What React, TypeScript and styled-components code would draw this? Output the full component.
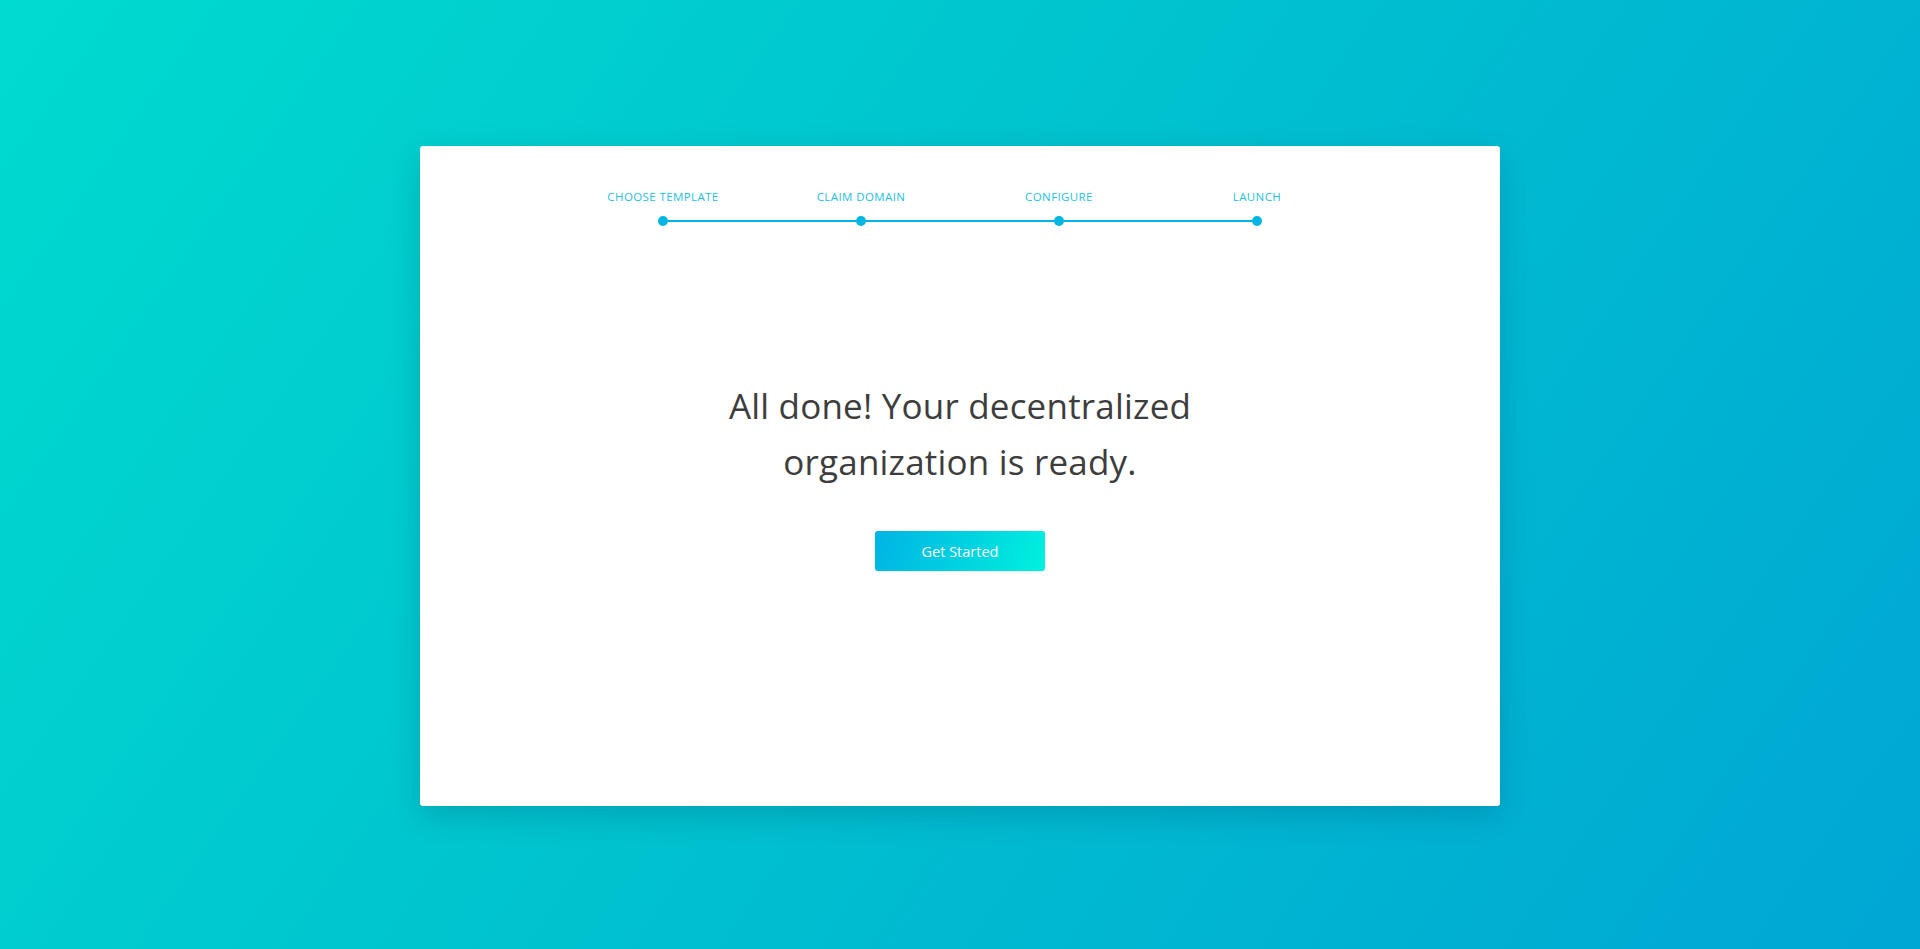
import React from "react";
import styled, { createGlobalStyle } from "styled-components";

const GlobalStyle = createGlobalStyle`
  html, body {
    margin: 0;
    padding: 0;
    height: 100%;
  }
  body {
    font-family: "Open Sans", "Noto Sans", sans-serif;
  }
  #root {
    height: 100%;
  }
`;

const Page = styled.div`
  box-sizing: border-box;
  width: 100%;
  height: 949px;
  padding-top: 3px;
  display: flex;
  align-items: center;
  justify-content: center;
  background: linear-gradient(125deg, #00dbcf 0%, #00c3cf 45%, #00a6d4 100%);
`;

const Card = styled.div`
  box-sizing: border-box;
  width: 1080px;
  height: 660px;
  background: #ffffff;
  border-radius: 3px;
  box-shadow: 0 10px 30px rgba(0, 60, 90, 0.22);
  display: flex;
  flex-direction: column;
  align-items: center;
  padding-top: 43px;
`;

const Stepper = styled.div`
  display: grid;
  grid-template-columns: repeat(4, 198px);
`;

const Step = styled.div`
  display: flex;
  flex-direction: column;
  align-items: center;
`;

const StepLabel = styled.div`
  font-family: "Open Sans", sans-serif;
  font-size: 11.5px;
  line-height: 16px;
  letter-spacing: 0.4px;
  color: #1fbfe6;
  text-transform: uppercase;
  white-space: nowrap;
`;

const Track = styled.div`
  display: flex;
  align-items: center;
  width: 100%;
  margin-top: 11px;
`;

const Segment = styled.div<{ $hidden?: boolean }>`
  flex: 1;
  height: 2px;
  background: ${(p) => (p.$hidden ? "transparent" : "#00b4e4")};
`;

const Dot = styled.div`
  width: 10px;
  height: 10px;
  border-radius: 50%;
  background: #00b4e4;
  flex: none;
`;

const Heading = styled.h1`
  margin: 152px 0 0;
  font-family: "Open Sans", sans-serif;
  font-weight: 400;
  font-size: 35px;
  line-height: 56px;
  color: #3d3d3d;
  text-align: center;
  letter-spacing: 0.2px;
`;

const Button = styled.button`
  margin-top: 41px;
  width: 170px;
  height: 40px;
  border: none;
  border-radius: 3px;
  background: linear-gradient(110deg, #00b4e4 0%, #00d4e0 55%, #00f2de 100%);
  color: #ffffff;
  font-family: "Open Sans", sans-serif;
  font-size: 14.5px;
  cursor: pointer;
  box-shadow: 0 1px 2px rgba(0, 0, 0, 0.08);
`;

const steps = ["Choose Template", "Claim Domain", "Configure", "Launch"];

export default function App() {
  return (
    <>
      <GlobalStyle />
      <Page>
        <Card>
          <Stepper>
            {steps.map((s, i) => (
              <Step key={s}>
                <StepLabel>{s}</StepLabel>
                <Track>
                  <Segment $hidden={i === 0} />
                  <Dot />
                  <Segment $hidden={i === steps.length - 1} />
                </Track>
              </Step>
            ))}
          </Stepper>
          <Heading>
            All done! Your decentralized
            <br />
            organization is ready.
          </Heading>
          <Button>Get Started</Button>
        </Card>
      </Page>
    </>
  );
}
